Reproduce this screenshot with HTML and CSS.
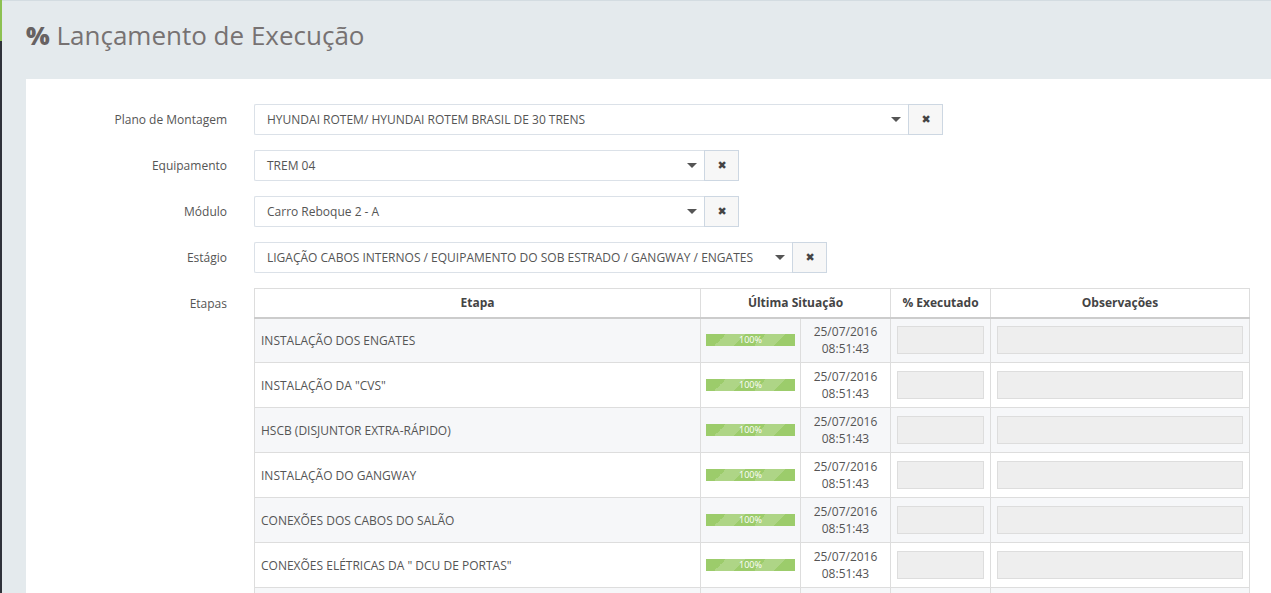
FILE: index.html
```html
<!DOCTYPE html>
<html lang="pt">
<head>
<meta charset="utf-8">
<title>Lançamento de Execução</title>
<link rel="stylesheet" href="styles.css">
</head>
<body>
<div class="edge"></div>
<div class="page">
  <header class="page-header">
    <h1><span class="pct">%</span> Lançamento de Execução</h1>
  </header>
  <main class="panel">
    <div class="form-row">
      <label class="lbl">Plano de Montagem</label>
      <div class="select-group">
        <div class="select w-plano"><span>HYUNDAI ROTEM/ HYUNDAI ROTEM BRASIL DE 30 TRENS</span><i class="caret"></i></div>
        <button class="clear">&#10006;</button>
      </div>
    </div>
    <div class="form-row">
      <label class="lbl">Equipamento</label>
      <div class="select-group">
        <div class="select w-equip"><span>TREM 04</span><i class="caret"></i></div>
        <button class="clear">&#10006;</button>
      </div>
    </div>
    <div class="form-row">
      <label class="lbl">Módulo</label>
      <div class="select-group">
        <div class="select w-equip"><span>Carro Reboque 2 - A</span><i class="caret"></i></div>
        <button class="clear">&#10006;</button>
      </div>
    </div>
    <div class="form-row">
      <label class="lbl">Estágio</label>
      <div class="select-group">
        <div class="select w-estagio"><span>LIGAÇÃO CABOS INTERNOS / EQUIPAMENTO DO SOB ESTRADO / GANGWAY / ENGATES</span><i class="caret"></i></div>
        <button class="clear">&#10006;</button>
      </div>
    </div>
    <div class="form-row table-row">
      <label class="lbl">Etapas</label>
      <table class="grid">
        <colgroup>
          <col class="w-etapa"><col class="w-bar"><col class="w-date"><col class="w-exec"><col>
        </colgroup>
        <thead>
          <tr>
            <th>Etapa</th>
            <th colspan="2">Última Situação</th>
            <th>% Executado</th>
            <th>Observações</th>
          </tr>
        </thead>
        <tbody>
          <tr class="odd">
            <td>INSTALAÇÃO DOS ENGATES</td>
            <td class="c-bar"><div class="bar">100%</div></td>
            <td class="c-date">25/07/2016<br>08:51:43</td>
            <td class="c-in"><div class="inp"></div></td>
            <td class="c-in"><div class="inp"></div></td>
          </tr>
          <tr>
            <td>INSTALAÇÃO DA "CVS"</td>
            <td class="c-bar"><div class="bar">100%</div></td>
            <td class="c-date">25/07/2016<br>08:51:43</td>
            <td class="c-in"><div class="inp"></div></td>
            <td class="c-in"><div class="inp"></div></td>
          </tr>
          <tr class="odd">
            <td>HSCB (DISJUNTOR EXTRA-RÁPIDO)</td>
            <td class="c-bar"><div class="bar">100%</div></td>
            <td class="c-date">25/07/2016<br>08:51:43</td>
            <td class="c-in"><div class="inp"></div></td>
            <td class="c-in"><div class="inp"></div></td>
          </tr>
          <tr>
            <td>INSTALAÇÃO DO GANGWAY</td>
            <td class="c-bar"><div class="bar">100%</div></td>
            <td class="c-date">25/07/2016<br>08:51:43</td>
            <td class="c-in"><div class="inp"></div></td>
            <td class="c-in"><div class="inp"></div></td>
          </tr>
          <tr class="odd">
            <td>CONEXÕES DOS CABOS DO SALÃO</td>
            <td class="c-bar"><div class="bar">100%</div></td>
            <td class="c-date">25/07/2016<br>08:51:43</td>
            <td class="c-in"><div class="inp"></div></td>
            <td class="c-in"><div class="inp"></div></td>
          </tr>
          <tr>
            <td>CONEXÕES ELÉTRICAS DA " DCU DE PORTAS"</td>
            <td class="c-bar"><div class="bar">100%</div></td>
            <td class="c-date">25/07/2016<br>08:51:43</td>
            <td class="c-in"><div class="inp"></div></td>
            <td class="c-in"><div class="inp"></div></td>
          </tr>
          <tr class="odd">
            <td>&nbsp;</td>
            <td>&nbsp;</td>
            <td>&nbsp;</td>
            <td>&nbsp;</td>
            <td>&nbsp;</td>
          </tr>
        </tbody>
      </table>
    </div>
  </main>
</div>
</body>
</html>
```
FILE: styles.css
```css
* { box-sizing: border-box; }
html, body { margin: 0; height: 100%; }
body {
  font-family: "Open Sans", "Liberation Sans", sans-serif;
  background: #e4eaed;
  display: flex;
  overflow: hidden;
  color: #555;
}
.edge {
  width: 2px;
  flex: none;
  background: linear-gradient(#8cc152 0 41px, #2f323a 41px);
}
.page {
  flex: 1;
  border-top: 1px solid #d3dce1;
  display: flex;
  flex-direction: column;
  min-width: 0;
}
.page-header {
  flex: none;
  height: 78px;
  padding-left: 24px;
  display: flex;
  align-items: center;
}
.page-header h1 {
  margin: 0;
  font-weight: 400;
  font-size: 26px;
  line-height: 34px;
  color: #777272;
  position: relative;
  top: -5px;
}
.pct {
  font-weight: 800;
  font-size: 25px;
  color: #676262;
}
.panel {
  flex: 1;
  margin-left: 24px;
  background: #fff;
  padding-top: 25px;
}
.form-row {
  display: flex;
  align-items: center;
  margin-bottom: 15px;
  font-size: 12px;
}
.lbl {
  width: 201px;
  text-align: right;
  color: #555;
  flex: none;
  margin-right: 27px;
}
.select-group { display: flex; height: 31px; }
.select {
  border: 1px solid #dbe1e8;
  border-right: none;
  display: flex;
  align-items: center;
  justify-content: space-between;
  padding: 0 7px 0 12px;
  color: #555;
  font-size: 12px;
  border-radius: 2px 0 0 2px;
  white-space: nowrap;
}
.w-plano { width: 654px; }
.w-equip { width: 450px; }
.w-estagio { width: 538px; }
.caret {
  width: 0; height: 0;
  border-left: 5px solid transparent;
  border-right: 5px solid transparent;
  border-top: 5px solid #555;
}
.clear {
  width: 35px;
  height: 31px;
  border: 1px solid #cdd7e2;
  background: #f7f7f7;
  color: #444;
  font-size: 11px;
  font-weight: bold;
  padding: 0 0 0 1px;
  font-family: "DejaVu Sans", sans-serif;
}
.table-row { align-items: flex-start; }
.table-row .lbl { padding-top: 7px; }
.grid {
  width: 996px;
  border-collapse: collapse;
  border: 1px solid #ddd;
  font-size: 12px;
  table-layout: fixed;
}
.w-etapa { width: 446px; }
.w-bar { width: 100px; }
.w-date { width: 90px; }
.w-exec { width: 100px; }
.grid th {
  height: 29px;
  font-weight: 700;
  color: #444;
  text-align: center;
  border: 1px solid #ddd;
  border-bottom: 2px solid #ccc;
  padding: 0;
}
.grid td {
  height: 45px;
  border-top: 1px solid #ddd;
  border-left: 1px solid #ddd;
  padding: 0 6px;
  color: #555;
  vertical-align: middle;
  white-space: nowrap;
}
.grid td:first-child { border-left: none; }
.grid tr.odd td { background: #f6f7f9; }
.grid td.c-bar { padding: 0 5px; }
.c-date { text-align: center; line-height: 17px; }
.bar {
  height: 12px;
  background-color: #9ccc6b;
  background-image: linear-gradient(-45deg, rgba(255,255,255,.18) 25%, transparent 25%, transparent 50%, rgba(255,255,255,.18) 50%, rgba(255,255,255,.18) 75%, transparent 75%, transparent);
  background-size: 40px 40px;
  color: #fff;
  font-size: 9px;
  line-height: 12px;
  text-align: center;
}
.inp {
  height: 28px;
  background: #eee;
  border: 1px solid #ddd;
}
```
